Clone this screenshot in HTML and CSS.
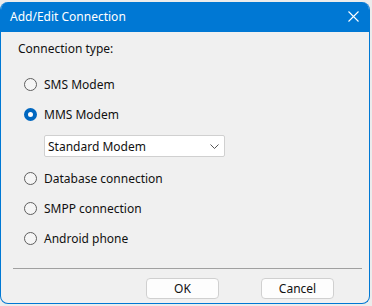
FILE: index.html
```html
<!DOCTYPE html>
<html lang="en">
<head>
    <meta charset="UTF-8">
    <title>Add/Edit Connection</title>
    <link rel="stylesheet" href="styles.css">
</head>
<body>
    <div class="window">
        <div class="titlebar">
            <span class="title">Add/Edit Connection</span>
            <svg class="close" width="11" height="11" viewBox="0 0 11 11">
                <path d="M0.5 0.5 L10.5 10.5 M10.5 0.5 L0.5 10.5" stroke="#fff" stroke-width="1.1" fill="none"/>
            </svg>
        </div>
        <div class="content">
            <div class="group-label">Connection type:</div>
            <div class="option"><span class="radio"></span>SMS Modem</div>
            <div class="option"><span class="radio checked"></span>MMS Modem</div>
            <div class="select">
                <span>Standard Modem</span>
                <svg width="9" height="5" viewBox="0 0 9 5">
                    <path d="M0.5 0.5 L4.5 4.5 L8.5 0.5" stroke="#555" stroke-width="1" fill="none"/>
                </svg>
            </div>
            <div class="option"><span class="radio"></span>Database connection</div>
            <div class="option"><span class="radio"></span>SMPP connection</div>
            <div class="option"><span class="radio"></span>Android phone</div>
        </div>
        <div class="separator"></div>
        <div class="buttons">
            <button class="btn">OK</button>
            <button class="btn">Cancel</button>
        </div>
    </div>
</body>
</html>
```

FILE: styles.css
```css
body {
    margin: 0;
    padding: 2px 2px 0 0;
    background-color: #ececec;
    font-family: "Noto Sans", "Open Sans", sans-serif;
    font-size: 12px;
    color: #111;
}
.window {
    width: 368px;
    height: 301px;
    border: 1px solid #0078d4;
    border-top: none;
    border-radius: 8px;
    background-color: #f0f0f0;
    overflow: hidden;
}
.titlebar {
    height: 30px;
    background-color: #0078d4;
    display: flex;
    align-items: center;
    justify-content: space-between;
    padding: 0 10px 0 9px;
    color: #fff;
}
.title {
    font-size: 12px;
    margin-top: -1px;
}
.close {
    margin-top: -1px;
}
.content {
    padding: 9px 0 0 17px;
    height: 227px;
}
.group-label {
    height: 16px;
    line-height: 16px;
}
.option {
    display: flex;
    align-items: center;
    height: 30px;
    margin-left: 6px;
}
.group-label + .option {
    margin-top: 12px;
}
.radio {
    width: 11px;
    height: 11px;
    border: 1px solid #5f5f5f;
    border-radius: 50%;
    background-color: #f5f5f5;
    margin-right: 7px;
}
.radio.checked {
    background-color: #fff;
    border: 4px solid #0067c0;
    width: 5px;
    height: 5px;
}
.select {
    margin: 6px 0 6px 26px;
    width: 171px;
    height: 20px;
    border: 1px solid #d0d0d0;
    background-color: #fff;
    border-radius: 2px;
    display: flex;
    align-items: center;
    justify-content: space-between;
    padding: 0 5px 0 3px;
}
.separator {
    margin: 0 7px 0 12px;
    border-top: 1px solid #a0a0a0;
}
.buttons {
    display: flex;
    justify-content: flex-end;
    gap: 42px;
    padding: 9px 35px 0 0;
}
.btn {
    width: 73px;
    height: 21px;
    font-family: inherit;
    font-size: 12px;
    color: #111;
    background-color: #fdfdfd;
    border: 1px solid #d0d0d0;
    border-radius: 4px;
    padding: 0;
}
```
